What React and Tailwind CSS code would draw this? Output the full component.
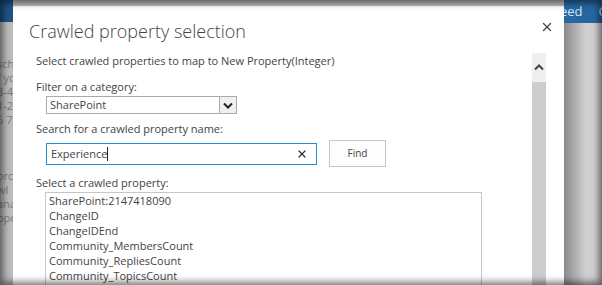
import { X } from "lucide-react"

const items = [
  "SharePoint:2147418090",
  "ChangeID",
  "ChangeIDEnd",
  "Community_MembersCount",
  "Community_RepliesCount",
  "Community_TopicsCount",
  "Community_LastActivity",
]

const leftText = ["sche", "f yo", "3-4", "1-2", "6 7", "", "", "", "orc", "wl", "ana", "ope"]

const App = () => {
  return (
    <div
      className="relative w-[602px] h-[285px] overflow-hidden flex bg-[#bdbdbd] text-[#444]"
      style={{ fontFamily: '"Open Sans", "Noto Sans", sans-serif' }}
    >
      {/* page behind the modal, left side */}
      <div className="w-[13px] shrink-0 flex flex-col">
        <div className="h-[22px] bg-[#1f5487]" />
        <div className="flex-1 bg-[#bcbcbc] pt-[35px] -ml-[3px] text-[11px] leading-[14px] text-[#7a7a7a] whitespace-nowrap overflow-hidden">
          {leftText.map((t, i) => (
            <div key={i}>{t || "\u00a0"}</div>
          ))}
        </div>
      </div>

      {/* dialog */}
      <div className="w-[551px] shrink-0 mt-[6px] bg-white flex flex-col">
        <div className="flex items-start justify-between pl-[16px] pr-[10px] pt-[12px]">
          <h1 className="text-[18px] leading-[26px] font-light text-[#444]">Crawled property selection</h1>
          <X size={14} strokeWidth={2.2} className="mt-[2px] text-[#444]" />
        </div>

        <div className="flex flex-1 mt-[9px] pr-[18px]">
          <div className="flex-1 pl-[23px] text-[11px] text-[#444]">
            <p className="leading-[16px]">Select crawled properties to map to New Property(Integer)</p>

            <p className="leading-[16px] mt-[10px]">Filter on a category:</p>
            <div className="ml-[10px] mt-[1px] w-[191px] h-[18px] border border-[#ababab] flex items-center">
              <span className="flex-1 pl-[3px] leading-[16px]">SharePoint</span>
              <div className="w-[17px] h-[16px] border-l border-[#ababab] bg-[#f0f0f0] flex items-center justify-center">
                <svg width="10" height="7" viewBox="0 0 10 7">
                  <path d="M1 1.5 L5 5.5 L9 1.5" fill="none" stroke="#222" strokeWidth="2" />
                </svg>
              </div>
            </div>

            <p className="leading-[16px] mt-[7px]">Search for a crawled property name:</p>
            <div className="flex items-center mt-[3px] ml-[10px]">
              <div className="w-[271px] h-[22px] border border-[#2a8dd4] flex items-center pl-[4px] pr-[8px]">
                <span className="leading-[16px]">Experience</span>
                <span className="w-px h-[14px] bg-[#222]" />
                <span className="flex-1" />
                <X size={12} strokeWidth={2.4} className="text-[#333]" />
              </div>
              <button className="ml-[12px] w-[57px] h-[27px] border border-[#c6c6c6] bg-[#fdfdfd] text-[10px] text-[#444]">
                Find
              </button>
            </div>

            <p className="leading-[16px] mt-[8px]">Select a crawled property:</p>
            <div className="ml-[9px] mt-[1px] w-[437px] h-[120px] border border-[#c6c6c6] pl-[3px] overflow-hidden">
              {items.map((it) => (
                <div key={it} className="leading-[15px] whitespace-nowrap">{it}</div>
              ))}
            </div>
          </div>

          {/* scrollbar */}
          <div className="w-[14px] flex flex-col">
            <div className="h-[29px] bg-[#efefef] flex items-center justify-center">
              <svg width="10" height="7" viewBox="0 0 10 7">
                <path d="M1 5.5 L5 1.5 L9 5.5" fill="none" stroke="#444" strokeWidth="2" />
              </svg>
            </div>
            <div className="flex-1 bg-[#cdcdcd]" />
          </div>
        </div>
      </div>

      {/* page behind the modal, right side */}
      <div className="flex-1 flex flex-col">
        <div className="h-[23px] bg-[#2667a3] text-[#d7e4f0] text-[13px] leading-[23px] whitespace-nowrap overflow-hidden">
          <span className="-ml-[4px]">eed</span>
          <span className="ml-[16px]">C</span>
        </div>
        <div className="flex-1 bg-gradient-to-r from-[#8a8a8a] via-[#d0d0d0] to-[#d0d0d0]" />
      </div>

      {/* vignette of the screenshot frame */}
      <div className="pointer-events-none absolute inset-0 shadow-[inset_0_0_7px_3px_rgba(0,0,0,0.55)]" />
    </div>
  )
}

export default App
